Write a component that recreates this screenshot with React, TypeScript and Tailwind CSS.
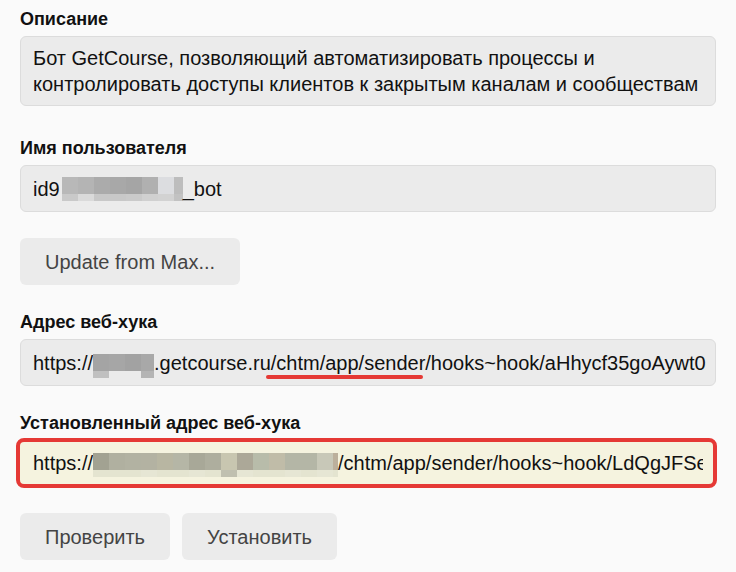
import { ReactNode } from "react";

type Cell = { w: string; top: string; bottom: string };

// pixelated blur patches that hide private parts of the values
const userCells: Cell[] = [
  { w: "w-[16px]", top: "bg-[#b8b8b8]", bottom: "bg-[#c9c9c9]" },
  { w: "w-[16px]", top: "bg-[#b4b4b4]", bottom: "bg-[#dadada]" },
  { w: "w-[16px]", top: "bg-[#ababab]", bottom: "bg-[#c8c8c8]" },
  { w: "w-[16px]", top: "bg-[#a8a8a8]", bottom: "bg-[#c8c8c8]" },
  { w: "w-[16px]", top: "bg-[#a5a5a5]", bottom: "bg-[#cacaca]" },
  { w: "w-[16px]", top: "bg-[#b0b0b0]", bottom: "bg-[#d0d0d0]" },
  { w: "w-[16px]", top: "bg-[#dcdde0]", bottom: "bg-[#d2d2d2]" },
  { w: "w-[9px]", top: "bg-[#bdbdbd]", bottom: "bg-[#c2c2c2]" },
];

const hostCells: Cell[] = [
  { w: "w-[16px]", top: "bg-[#a4a4a4]", bottom: "bg-[#c0c0c0]" },
  { w: "w-[16px]", top: "bg-[#a6a6a6]", bottom: "bg-transparent" },
  { w: "w-[16px]", top: "bg-[#a2a2a2]", bottom: "bg-transparent" },
  { w: "w-[13px]", top: "bg-[#a8a8a8]", bottom: "bg-[#b4b4b4]" },
];

const fullHostCells: Cell[] = [
  { w: "w-[16px]", top: "bg-[#a2a292]", bottom: "bg-[#e4e4d0]" },
  { w: "w-[16px]", top: "bg-[#b0b0a0]", bottom: "bg-[#e4e4d0]" },
  { w: "w-[16px]", top: "bg-[#b2b2a2]", bottom: "bg-[#e4e4d0]" },
  { w: "w-[16px]", top: "bg-[#b3b2a2]", bottom: "bg-[#e6e6d4]" },
  { w: "w-[16px]", top: "bg-[#b8b6a2]", bottom: "bg-[#e4e4d0]" },
  { w: "w-[16px]", top: "bg-[#b5b6a6]", bottom: "bg-[#e4e4d0]" },
  { w: "w-[16px]", top: "bg-[#a8a898]", bottom: "bg-[#e6e6d4]" },
  { w: "w-[16px]", top: "bg-[#aeae9e]", bottom: "bg-[#e4e4d0]" },
  { w: "w-[16px]", top: "bg-[#c8c6b0]", bottom: "bg-[#c0c0b0]" },
  { w: "w-[16px]", top: "bg-[#aca898]", bottom: "bg-[#e6e6d4]" },
  { w: "w-[16px]", top: "bg-[#b8bcaa]", bottom: "bg-[#e4e4d0]" },
  { w: "w-[16px]", top: "bg-[#c0bca8]", bottom: "bg-[#e4e4d0]" },
  { w: "w-[16px]", top: "bg-[#b4b6a6]", bottom: "bg-[#e6e6d4]" },
  { w: "w-[16px]", top: "bg-[#b4b6a6]", bottom: "bg-[#e4e4d0]" },
  { w: "w-[16px]", top: "bg-[#c8c8b8]", bottom: "bg-[#e6e6d4]" },
  { w: "w-[5px]", top: "bg-[#bcb09c]", bottom: "bg-[#e4e4d0]" },
];

function Mosaic({ cells, className = "" }: { cells: Cell[]; className?: string }) {
  return (
    <span className={`flex shrink-0 ${className}`}>
      {cells.map((c, i) => (
        <span key={i} className={`flex flex-col ${c.w}`}>
          <span className={`h-[17px] ${c.top}`} />
          <span className={`h-[7px] ${c.bottom}`} />
        </span>
      ))}
    </span>
  );
}

function Label({ children, className = "" }: { children: ReactNode; className?: string }) {
  return (
    <div className={`text-[18px] leading-[24px] font-bold text-[#111] mb-[5px] ${className}`}>
      {children}
    </div>
  );
}

function Field({ children }: { children: ReactNode }) {
  return (
    <div className="flex items-center h-[47px] rounded-[6px] border border-[#dcdcdc] bg-[#ebebeb] pl-3 pr-3 text-[20px] leading-[26px] text-[#111] whitespace-nowrap overflow-hidden">
      {children}
    </div>
  );
}

function Button({ children }: { children: ReactNode }) {
  return (
    <button className="h-[47px] px-[25px] rounded-[6px] bg-[#ebebeb] text-[20px] text-[#444]">
      {children}
    </button>
  );
}

export default function App() {
  return (
    <div className="min-h-screen bg-[#fafafa] px-5 pt-[7px] font-['Liberation_Sans',Arial,sans-serif]">
      <Label>Описание</Label>
      <div className="rounded-[6px] border border-[#dcdcdc] bg-[#ebebeb] px-3 py-2 text-[20px] leading-[26px] text-[#111]">
        Бот GetCourse, позволяющий автоматизировать процессы и
        <br />
        контролировать доступы клиентов к закрытым каналам и сообществам
      </div>

      <Label className="mt-[30px]">Имя пользователя</Label>
      <Field>
        <span>id9</span>
        <Mosaic cells={userCells} className="ml-[2px] h-[24px]" />
        <span>_bot</span>
      </Field>

      <div className="mt-[26px]">
        <Button>Update from Max...</Button>
      </div>

      <Label className="mt-[25px]">Адрес веб-хука</Label>
      <Field>
        <span>https://</span>
        <Mosaic cells={hostCells} className="mt-[6px] h-[24px]" />
        <span>.getcourse.ru</span>
        <span className="relative">
          /chtm/app/sender
          <span className="absolute left-[-5px] right-[2px] bottom-[-3px] h-[4px] rounded-full bg-[#e53935]" />
        </span>
        <span>/hooks~hook/aHhycf35goAywt0</span>
      </Field>

      <Label className="mt-[25px]">Установленный адрес веб-хука</Label>
      <div className="-mt-[2px] -ml-[4px] -mr-[1px] flex items-center h-[50px] rounded-[8px] border-[4px] border-[#e53935] bg-[#f5f3df] pl-[13px] pr-[10px] text-[20px] leading-[26px] text-[#111] whitespace-nowrap">
        <div className="flex items-center overflow-hidden">
          <span>https://</span>
          <Mosaic cells={fullHostCells} className="mt-[4px] h-[24px]" />
          <span>/chtm/app/sender/hooks~hook/LdQgJFSeXk2pQ</span>
        </div>
      </div>

      <div className="mt-[25px] flex gap-3">
        <Button>Проверить</Button>
        <Button>Установить</Button>
      </div>
    </div>
  );
}
